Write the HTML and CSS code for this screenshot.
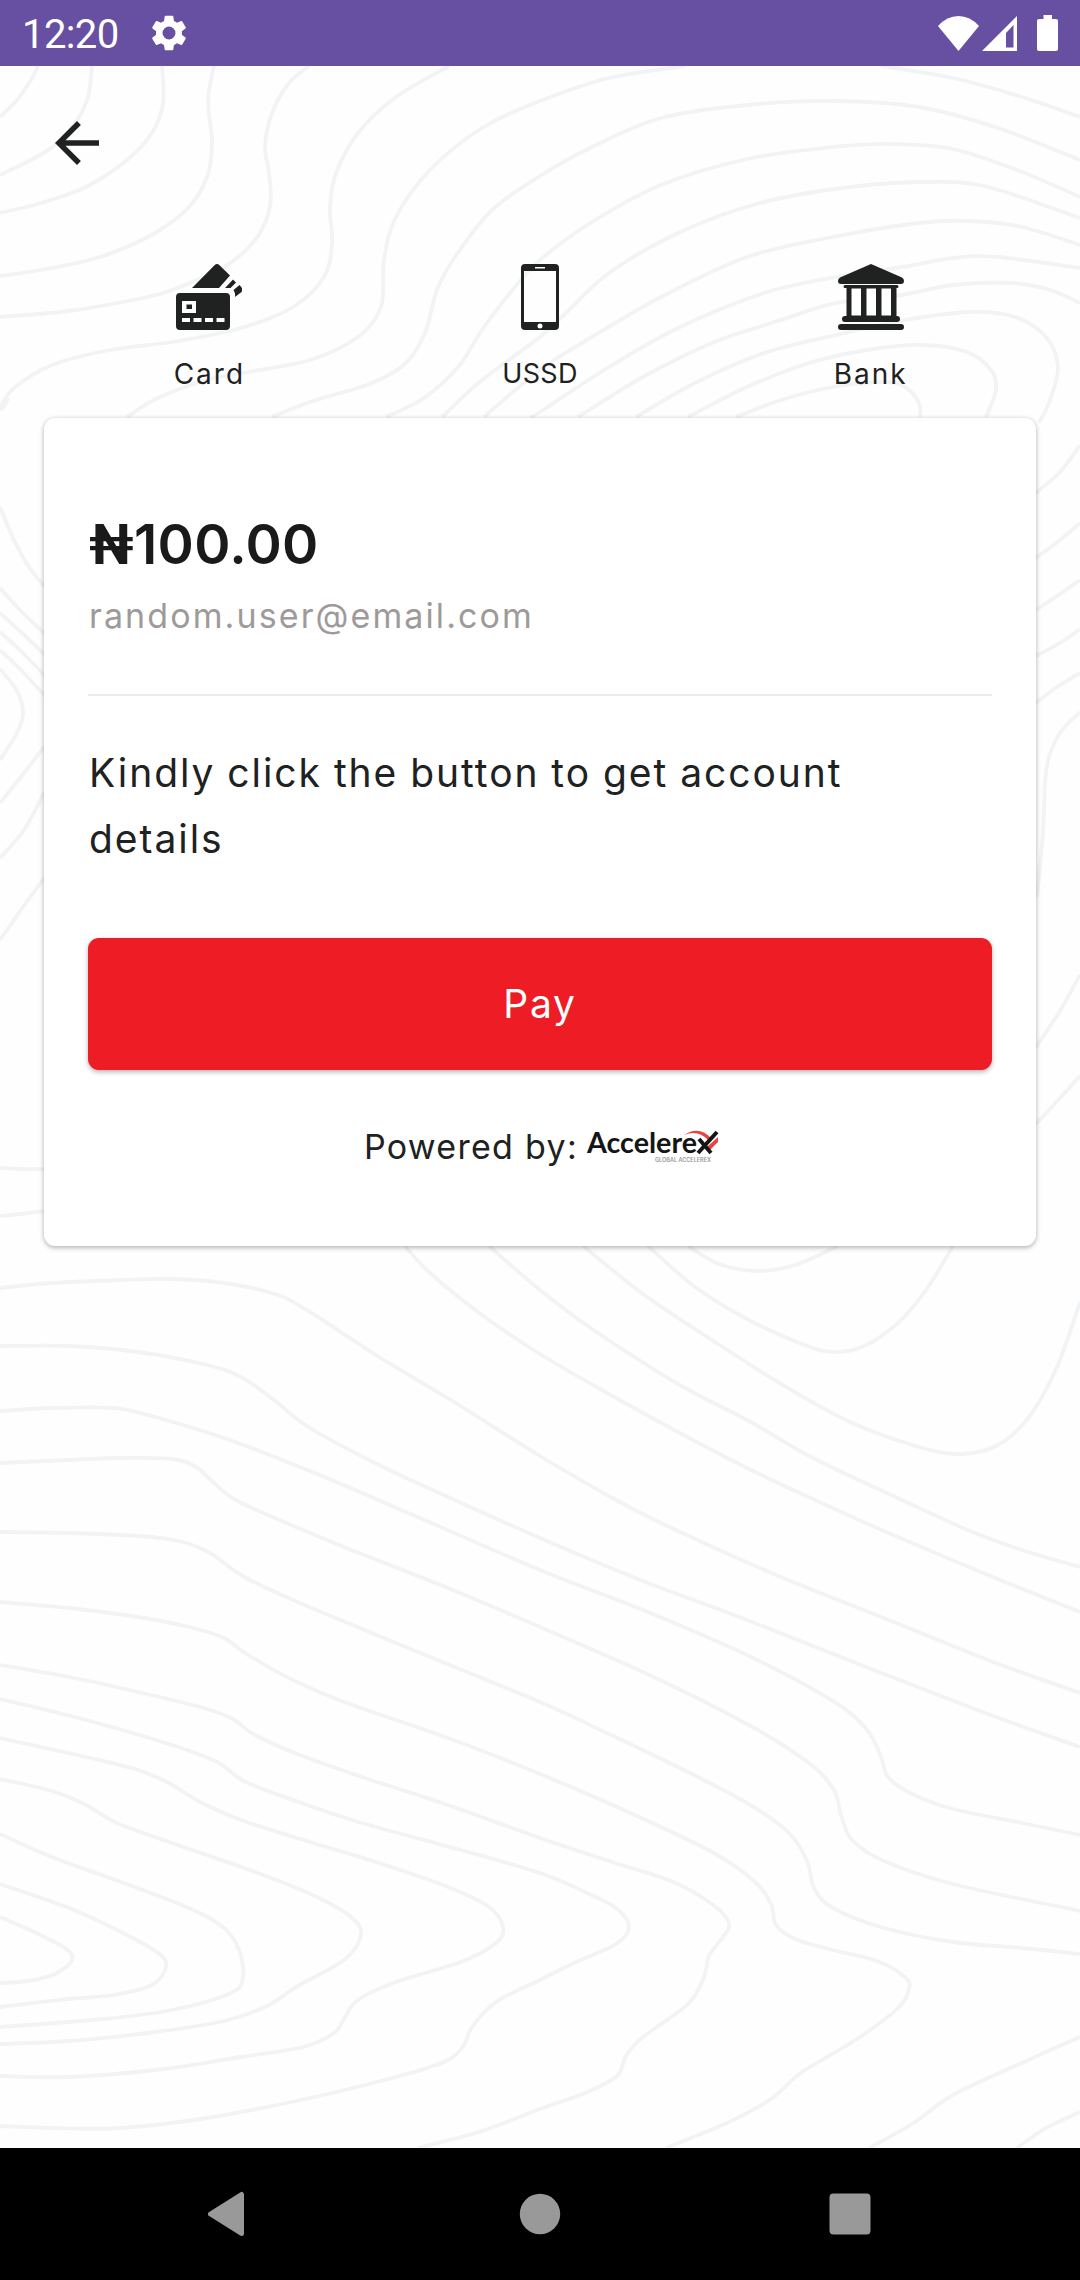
FILE: index.html
```html
<!DOCTYPE html>
<html lang="en">
<head>
<meta charset="utf-8">
<title>Payment</title>
<link rel="stylesheet" href="styles.css">
</head>
<body>
<div class="screen">
  <header class="status">
    <span class="clock">12:20</span>
    <svg class="gear" viewBox="2 2 20 20"><path fill-rule="evenodd" d="M19.14 12.94c.04-.3.06-.61.06-.94 0-.32-.02-.64-.07-.94l2.03-1.58a.49.49 0 0 0 .12-.61l-1.92-3.32a.49.49 0 0 0-.59-.22l-2.39.96c-.5-.38-1.03-.7-1.62-.94l-.36-2.54a.48.48 0 0 0-.48-.41h-3.84c-.24 0-.43.17-.47.41l-.36 2.54c-.59.24-1.13.57-1.62.94l-2.39-.96a.48.48 0 0 0-.59.22L2.74 8.87c-.12.21-.08.47.12.61l2.03 1.58c-.05.3-.09.63-.09.94s.02.64.07.94l-2.03 1.58a.49.49 0 0 0-.12.61l1.92 3.32c.12.22.37.29.59.22l2.39-.96c.5.38 1.03.7 1.62.94l.36 2.54c.05.24.24.41.48.41h3.84c.24 0 .44-.17.47-.41l.36-2.54c.59-.24 1.13-.56 1.62-.94l2.39.96c.22.08.47 0 .59-.22l1.92-3.32a.48.48 0 0 0-.12-.61zM12 15.6A3.6 3.6 0 1 1 12 8.400a3.6 3.6 0 0 1 0 7.200z"/></svg>
    <div class="signals">
      <svg class="wifi" viewBox="0 0 41 35"><path d="M20.500 35 0 10Q9 0 20.500 0T41 10Z"/></svg>
      <svg class="cell" viewBox="0 0 35 35"><path fill-rule="evenodd" d="M35 0V35H0ZM31.500 9 24 17V31.500H31.500Z"/></svg>
      <svg class="battery" viewBox="0 0 21 36"><path d="M6.500 0H15V4H19Q21 4 21 6V34Q21 36 19 36H2Q0 36 0 34V6Q0 4 2 4H6.500Z"/></svg>
    </div>
  </header>

  <main class="page">
    <svg class="contours" viewBox="0 66 1080 2082" aria-hidden="true"></svg>
    <a class="back"><svg viewBox="0 0 24 24"><path d="M20 11H7.830l5.590-5.590L12 4l-8 8 8 8 1.410-1.410L7.830 13H20v-2z"/></svg></a>

    <nav class="methods">
      <a class="method">
        <svg viewBox="0 0 66 66"><path fill-rule="evenodd" d="M4 29H50Q54 29 54 33V62Q54 66 50 66H4Q0 66 0 62V33Q0 29 4 29ZM6 37V49H20V37ZM6 54V58H14V54ZM17.500 54V58H25.500V54ZM29 54V58H37V54ZM40.500 54V58H48.500V54Z"/><path d="M10.500 40.500H16V45H10.500ZM16 24 38.500 1.200Q41 -1 43.500 1.200L54 11.500 43 24ZM49 24 57 15.500 60 18.500 54.500 24ZM57.500 26 63.500 21Q68 25.500 65.500 28L59 33Q59.500 29 57.500 26Z"/></svg>
        <span>Card</span>
      </a>
      <a class="method ussd">
        <svg viewBox="0 0 66 66"><path fill-rule="evenodd" d="M18 0H48Q52 0 52 4V62Q52 66 48 66H18Q14 66 14 62V4Q14 0 18 0ZM17 7V58H49V7ZM28 3V4.500H38V3ZM33 59.500A2.500 2.500 0 1 0 33 64.500 2.500 2.500 0 0 0 33 59.500Z"/></svg>
        <span>USSD</span>
      </a>
      <a class="method">
        <svg viewBox="0 0 66 66"><path d="M33 0 64 13.500Q66 14.500 66 17 66 20 63 20H3Q0 20 0 17 0 14.500 2 13.500ZM7 21H59Q60.500 21 60.500 22.500T59 24H58.500V52H59Q62 52 62 55T59 58H7Q4 58 4 55T7 52H8.500V24H7Q5.500 24 5.500 22.500T7 21ZM3 60H63Q66 60 66 63T63 66H3Q0 66 0 63T3 60Z"/><path fill="#fff" d="M13.500 24.500H23V51.500H13.500ZM28.500 24.500H38V51.500H28.500ZM43.500 24.500H53V51.500H43.500Z"/></svg>
        <span>Bank</span>
      </a>
    </nav>

    <section class="card">
      <h1 class="amount"><span class="naira">₦</span>100.00</h1>
      <p class="email">random.user@email.com</p>
      <hr class="rule">
      <p class="hint"><span class="line-one">Kindly click the button to get account</span> details</p>
      <button class="pay">Pay</button>
      <footer class="powered">
        <span>Powered by:</span>
        <svg class="logo" viewBox="0 0 132 34">
          <path class="swoosh" d="M97 5Q112 -5 124 8L121 10Q111 -1 97 5ZM131 7V12L123 20 120 17Z"/>
          <text class="brand" x="0" y="23" textLength="110" lengthAdjust="spacingAndGlyphs">Accelere</text>
          <path class="cross" d="M112 9 124 23M111 23 130 2"/>
          <text class="sub" x="68" y="32" textLength="56" lengthAdjust="spacingAndGlyphs">GLOBAL ACCELEREX</text>
        </svg>
      </footer>
    </section>
  </main>

  <nav class="system">
    <svg viewBox="0 0 48 48"><path d="M35.500 4.500V43.500L4.500 24Z" stroke-width="5" class="tri"/></svg>
    <svg viewBox="0 0 48 48"><circle cx="24" cy="24" r="20.200"/></svg>
    <svg viewBox="0 0 48 48"><rect x="3.500" y="3.500" width="41" height="41" rx="4"/></svg>
  </nav>
</div>
<script src="contours.js"></script>
</body>
</html>
```
FILE: styles.css
```css
* { box-sizing: border-box; margin: 0; padding: 0; }
body { width: 1080px; font-family: Inter, "Open Sans", sans-serif; color: #202121; background: #fefefe; }
svg { display: block; }
.screen { height: 2280px; display: flex; flex-direction: column; overflow: hidden; }

.status { height: 66px; flex: none; display: flex; align-items: center; padding: 0 22px; background: #6750a2; color: #fff; fill: #fff; }
.clock { font: 40px/66px Roboto, sans-serif; letter-spacing: -0.6px; width: 129px; padding-top: 3px; }
.gear { width: 36px; height: 36px; }
.signals { margin-left: auto; display: flex; align-items: center; }
.wifi { width: 41px; height: 35px; margin-right: 3px; }
.cell { width: 35px; height: 35px; margin-right: 20px; }
.battery { width: 21px; height: 36px; }

.page { flex: 1; position: relative; padding: 44px 44px 0; }
.contours { position: absolute; inset: 0; width: 1080px; height: 2082px; fill: none; stroke: #f2f3f4; stroke-width: 3.8; }
.back, .methods, .card { position: relative; }
.back { display: block; width: 66px; height: 66px; fill: #202121; }
.back svg { width: 66px; height: 66px; }

.methods { display: grid; grid-template-columns: repeat(3, 1fr); margin-top: 88px; height: 154px; }
.method { display: flex; flex-direction: column; align-items: center; gap: 23px; fill: #202121; font-size: 28px; line-height: 42px; letter-spacing: 2px; }
.ussd { font-size: 27px; letter-spacing: 0.3px; }
.method svg { width: 66px; height: 66px; }

.card { height: 828px; padding: 88px 44px 0; border-radius: 11px; background: #fff; box-shadow: 0 2px 5px rgba(0,0,0,.24), 0 0 4px rgba(0,0,0,.1); }
.amount { padding-left: 1px; font-size: 55px; font-weight: 600; line-height: 76px; letter-spacing: 0.3px; color: #1a1a1a; }
.naira { font-family: Roboto, sans-serif; font-weight: 700; }
.email { padding-left: 1px; font-size: 34px; line-height: 50px; letter-spacing: 2.1px; color: #9e9a9a; margin-top: 8px; }
.rule { border: 0; height: 2px; background: #ebebeb; margin-top: 54px; transform: translateY(-1px); }
.hint { padding-left: 1px; font-size: 39px; line-height: 66px; letter-spacing: 1.95px; word-spacing: -1px; margin-top: 43px; }
.line-one { white-space: nowrap; display: block; }
.pay { display: block; width: 904px; height: 132px; margin-top: 66px; padding-bottom: 2px; border: 0; border-radius: 11px; background: #ee1c25; color: #fff; font: 39px Inter, sans-serif; letter-spacing: 1.7px; box-shadow: 0 2px 5px rgba(0,0,0,.3); }
.powered { display: flex; justify-content: center; align-items: center; gap: 9px; margin: 49px -3px 0 0; height: 54px; font-size: 34px; letter-spacing: 1.3px; white-space: nowrap; }
.logo { width: 132px; height: 34px; overflow: visible; margin-top: 2px; }
.brand { font: 700 29px Lato, sans-serif; letter-spacing: 0; fill: #151515; }
.sub { font: 600 5.5px Inter, sans-serif; letter-spacing: 0; fill: #999; }
.swoosh { fill: #e8443f; }
.cross { fill: none; stroke: #151515; stroke-width: 4; }

.system { height: 132px; flex: none; display: grid; grid-template-columns: 310px 310px 310px; justify-content: center; justify-items: center; align-items: center; background: #000; fill: #999; }
.system svg { width: 48px; height: 48px; }
.tri { stroke: #999; stroke-linejoin: round; }
```
FILE: contours.js
```js
// Map contour lines behind the page, each a list of x,y points joined by a smooth curve.
const lines = `
0,117 17,100 31,80 38,66
0,175 31,160 55,145 76,122 88,97 92,66
0,213 41,203 86,187 127,160 152,133 163,103 162,66
0,276 52,268 103,256 155,233 189,207 207,177 212,143 208,100 214,66
0,317 69,311 138,299 172,290 224,267 255,240 270,207 269,173 265,147 272,113 289,83 309,66
0,408 14,388 52,365 110,350 172,342 241,328 293,307 324,277 332,243 330,207 336,173 358,133 396,97 449,66
127,417 158,398 207,380 248,372 310,360 358,337 381,307 384,260 396,217 430,170 482,128 540,101 609,78 685,66
881,66 953,78 1022,97 1080,117
272,417 310,402 372,383 406,363 425,333 437,290 455,257 492,210 540,176 592,147 661,118 747,105 833,101 919,107 998,128 1080,160
386,417 424,398 458,367 482,330 510,293 540,260 592,222 661,185 747,159 833,147 891,144 953,149 1022,172 1080,197
442,417 482,380 540,337 566,313 609,273 678,233 760,203 850,187 929,182 988,187 1080,218
484,417 540,370 592,337 661,297 747,257 833,237 919,223 970,221 1022,227 1080,245
530,417 540,412 609,367 678,328 764,293 836,277 902,267 953,258 998,257 1080,268
578,417 643,377 712,343 781,320 836,303 902,295 953,285 1012,283 1050,290 1080,303
636,417 695,383 764,353 836,335 905,320 970,312 1015,317 1046,337 1058,367 1050,400 1039,423
688,417 747,387 809,363 867,350 922,345 967,352 991,370 996,390 986,417
736,417 781,400 833,387 884,382 905,387 919,403 920,417
1036,493 1060,472 1080,445
1036,558 1060,540 1080,523
1036,610 1060,594 1080,580
1036,656 1060,643 1080,629
1036,703 1057,687 1080,673
1080,712 1060,733 1049,757 1045,783 1043,833 1037,897
1036,1047 1060,1011 1080,975
1036,1124 1060,1098 1080,1076
688,1246 719,1264 757,1271 795,1265 838,1246
648,1246 695,1287 747,1319 802,1344 833,1352 864,1346 898,1323 926,1290 953,1246
583,1246 643,1294 712,1340 781,1384 850,1422 919,1447 960,1454 998,1445 1029,1417 1057,1367 1080,1302
489,1246 540,1290 592,1329 678,1384 747,1420 815,1459 902,1500 970,1531 1022,1550 1080,1567
405,1246 430,1273 482,1315 540,1354 609,1394 678,1432 747,1468 815,1500 884,1531 988,1575 1080,1612
0,1288 52,1283 121,1280 172,1279 224,1283 275,1294 310,1312 379,1357 451,1400 540,1456 616,1500 678,1531 781,1577 884,1618 988,1660 1080,1693
0,1346 69,1346 138,1352 207,1365 241,1377 274,1400 310,1428 379,1465 448,1497 540,1538 643,1581 747,1620 884,1674 988,1714 1080,1747
0,1411 52,1408 114,1408 155,1417 224,1438 310,1471 413,1515 540,1570 643,1610 747,1655 833,1701 867,1730 881,1757 888,1777 912,1794 953,1809 1022,1823 1080,1835
0,1463 69,1460 121,1458 172,1459 196,1467 213,1482 234,1499 275,1518 344,1547 448,1588 540,1627 643,1672 747,1724 809,1763 834,1790 841,1815 852,1840 884,1861 953,1884 1080,1911
0,1532 69,1533 138,1536 179,1541 210,1553 241,1575 293,1600 413,1650 540,1702 609,1734 678,1767 747,1803 788,1832 807,1861 814,1888 833,1908 884,1928 953,1942 1022,1948 1080,1954
0,1602 69,1608 138,1617 189,1627 224,1638 248,1655 293,1680 344,1702 448,1738 540,1774 626,1811 712,1852 754,1881 771,1904 776,1925 795,1939 833,1950 877,1961 905,1977 909,1989 898,2008 857,2039 802,2072 771,2099 729,2122 666,2148
0,1665 69,1677 138,1692 200,1707 231,1718 255,1735 300,1755 362,1777 448,1805 540,1838 609,1861 671,1881 712,1904 729,1923 723,1937 709,1956 704,1977 688,2004 643,2037 626,2056 617,2076 585,2093 540,2109 482,2131 418,2148
0,1699 86,1720 172,1745 217,1762 244,1781 293,1800 362,1823 461,1850 540,1873 585,1892 616,1908 629,1927 616,1944 574,1963 540,1980 496,2002 472,2027 463,2047 444,2062 396,2077 310,2098 207,2118 121,2128 52,2128 0,2126
0,1738 86,1757 138,1770 169,1783 200,1802 241,1820 310,1842 379,1863 448,1887 489,1907 503,1927 496,1943 461,1962 396,1982 358,2000 345,2017 334,2033 303,2047 241,2057 155,2070 69,2077 0,2076
0,1779 52,1791 86,1805 117,1823 172,1843 258,1873 317,1897 351,1917 361,1935 344,1960 296,1987 269,2005 224,2021 155,2032 69,2041 0,2044
0,1834 52,1857 121,1882 189,1908 224,1928 239,1950 243,1977 231,1993 172,2010 103,2019 0,2027
0,1884 69,1908 121,1932 158,1953 166,1967 152,1985 114,1995 69,1999 0,2007
0,1917 34,1932 65,1948 72,1960 55,1974 28,1981 0,1983
869,2148 912,2124 953,2095 1015,2066 1080,2037
1017,2148 1046,2128 1080,2112
0,940 28,900 45,877
0,1168 20,1169 44,1169
0,1216 20,1214 44,1211
0,507 14,540 29,567 45,587
0,588 22,612 45,634
0,613 22,633 45,655
0,632 22,652 45,676
0,650 22,671 45,696
0,760 17,733 23,713 17,691 0,669
0,803 24,773 44,747
0,858 24,830 44,793
0,410 5,405 8,398`;

const paths = lines.trim().split("\n").map(line => {
  const p = line.split(" ").map(s => s.split(",").map(Number));
  let d = `M${p[0]}`;
  for (let i = 0; i < p.length - 1; i++) {
    const a = p[i - 1] || p[i], b = p[i], c = p[i + 1], e = p[i + 2] || c;
    d += `C${b[0] + (c[0] - a[0]) / 6},${b[1] + (c[1] - a[1]) / 6} ${c[0] - (e[0] - b[0]) / 6},${c[1] - (e[1] - b[1]) / 6} ${c}`;
  }
  return `<path d="${d}"/>`;
});
document.querySelector(".contours").innerHTML = paths.join("");
```
